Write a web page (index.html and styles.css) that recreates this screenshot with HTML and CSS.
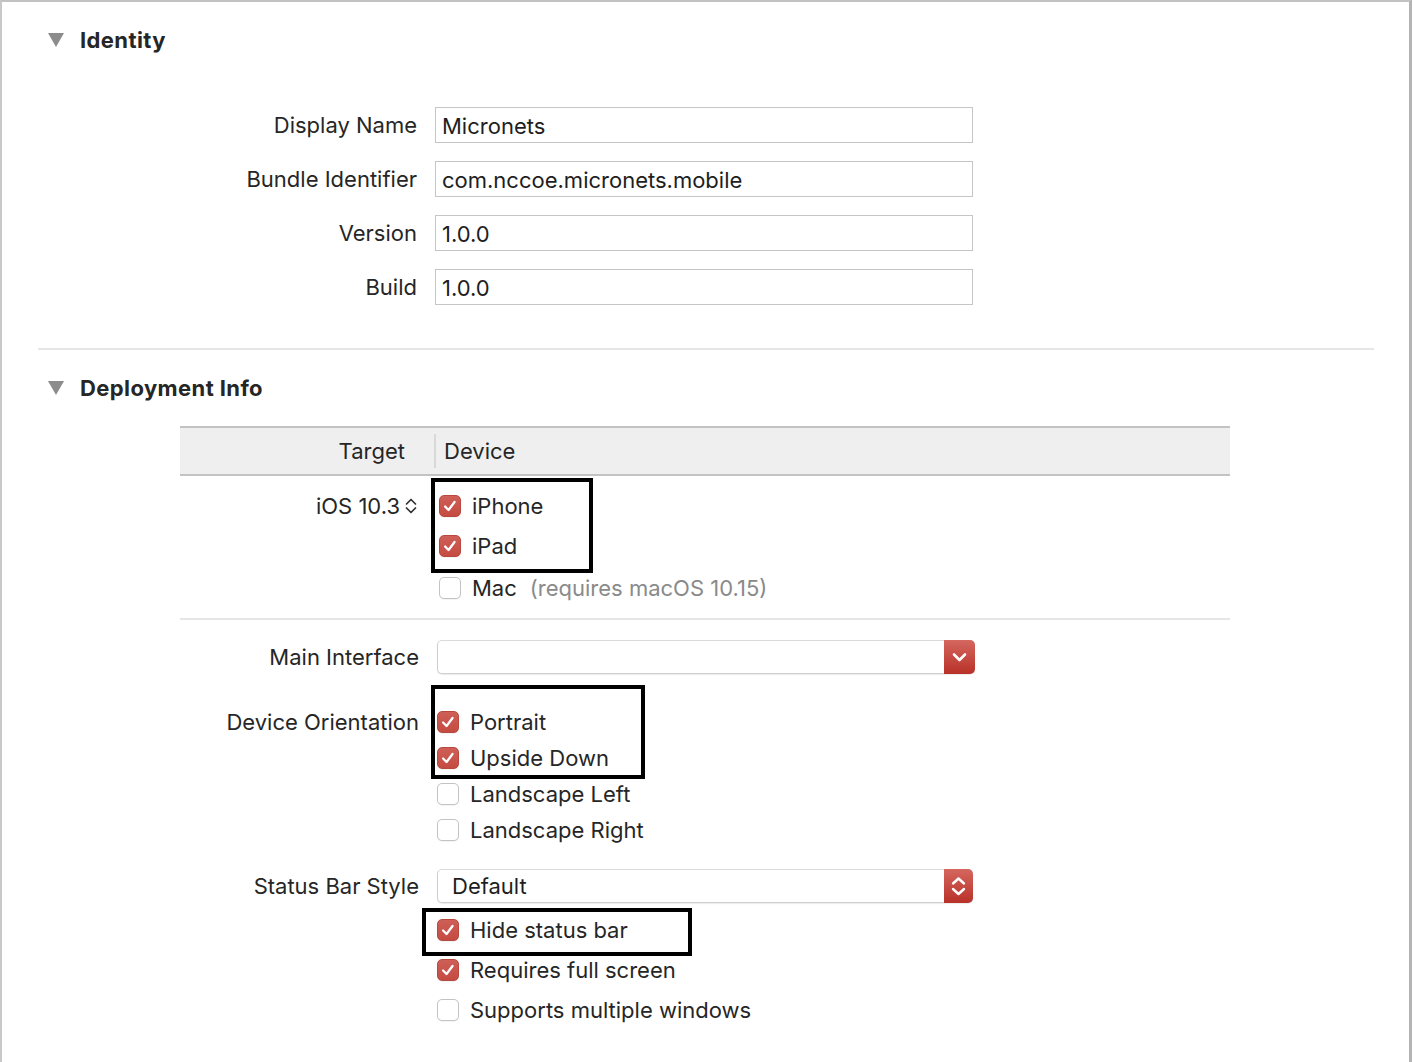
FILE: index.html
```html
<!DOCTYPE html>
<html lang="en">
<head>
  <meta charset="UTF-8">
  <meta name="viewport" content="width=device-width, initial-scale=1.0">
  <link rel="stylesheet" href="styles.css">
  <title>General - Micronets</title>
</head>
<body>

  <div class="pane">

    <!-- Identity -->
    <section class="group">
      <h2 class="group-title"><span class="disclosure"></span>Identity</h2>

      <div class="id-form">
        <div class="label">Display Name</div>
        <div class="field">Micronets</div>
        <div class="label">Bundle Identifier</div>
        <div class="field">com.nccoe.micronets.mobile</div>
        <div class="label">Version</div>
        <div class="field">1.0.0</div>
        <div class="label">Build</div>
        <div class="field">1.0.0</div>
      </div>
    </section>

    <div class="divider"></div>

    <!-- Deployment Info -->
    <section class="group">
      <h2 class="group-title group-title-deploy"><span class="disclosure"></span>Deployment Info</h2>

      <div class="targets">
        <div class="targets-head">
          <div class="th th-target">Target</div>
          <div class="th th-device">Device</div>
        </div>
        <div class="targets-body">
          <div class="target-os">
            iOS 10.3
            <svg class="stepper" width="12" height="18" viewBox="0 0 12 18">
              <path d="M1.5 7 L6 2.5 L10.5 7" fill="none" stroke="#333" stroke-width="1.7" stroke-linecap="round" stroke-linejoin="round"/>
              <path d="M1.5 11 L6 15.5 L10.5 11" fill="none" stroke="#333" stroke-width="1.7" stroke-linecap="round" stroke-linejoin="round"/>
            </svg>
          </div>
          <div class="device-list">
            <div class="check-row"><span class="check on"><svg viewBox="0 0 22 22"><path d="M5.6 11.6 L9.4 15.4 L16 6.6"/></svg></span>iPhone</div>
            <div class="check-row"><span class="check on"><svg viewBox="0 0 22 22"><path d="M5.6 11.6 L9.4 15.4 L16 6.6"/></svg></span>iPad</div>
            <div class="check-row check-row-mac"><span class="check"></span>Mac<span class="note">(requires macOS 10.15)</span></div>
          </div>
        </div>
      </div>

      <div class="divider divider-short"></div>

      <div class="row row-main">
        <div class="label">Main Interface</div>
        <div class="popup">
          <div class="popup-value"></div>
          <span class="popup-btn">
            <svg width="31" height="34" viewBox="0 0 31 34"><path d="M10 14.5 L15.5 20 L21 14.5" fill="none" stroke="#fff" stroke-width="2.6" stroke-linecap="round" stroke-linejoin="round"/></svg>
          </span>
        </div>
      </div>

      <div class="row row-orient">
        <div class="label label-top">Device Orientation</div>
        <div class="check-list">
          <div class="check-row check-row-36"><span class="check on"><svg viewBox="0 0 22 22"><path d="M5.6 11.6 L9.4 15.4 L16 6.6"/></svg></span>Portrait</div>
          <div class="check-row check-row-36"><span class="check on"><svg viewBox="0 0 22 22"><path d="M5.6 11.6 L9.4 15.4 L16 6.6"/></svg></span>Upside Down</div>
          <div class="check-row check-row-36"><span class="check"></span>Landscape Left</div>
          <div class="check-row check-row-36"><span class="check"></span>Landscape Right</div>
        </div>
      </div>

      <div class="row row-status">
        <div class="label">Status Bar Style</div>
        <div class="popup popup-status">
          <div class="popup-value">Default</div>
          <span class="popup-btn">
            <svg width="29" height="34" viewBox="0 0 29 34"><path d="M9 14.5 L14.5 9.5 L20 14.5" fill="none" stroke="#fff" stroke-width="2.4" stroke-linecap="round" stroke-linejoin="round"/><path d="M9 20 L14.5 25 L20 20" fill="none" stroke="#fff" stroke-width="2.4" stroke-linecap="round" stroke-linejoin="round"/></svg>
          </span>
        </div>
      </div>

      <div class="row row-flags">
        <div class="label"></div>
        <div class="check-list">
          <div class="check-row"><span class="check on"><svg viewBox="0 0 22 22"><path d="M5.6 11.6 L9.4 15.4 L16 6.6"/></svg></span>Hide status bar</div>
          <div class="check-row"><span class="check on"><svg viewBox="0 0 22 22"><path d="M5.6 11.6 L9.4 15.4 L16 6.6"/></svg></span>Requires full screen</div>
          <div class="check-row"><span class="check"></span>Supports multiple windows</div>
        </div>
      </div>
    </section>

    <!-- annotation boxes drawn over the form -->
    <div class="mark mark-devices"></div>
    <div class="mark mark-orient"></div>
    <div class="mark mark-status"></div>

  </div>

</body>
</html>
```

FILE: styles.css
```css
html, body {
  margin: 0;
  padding: 0;
  background: #fff;
}

body {
  font-family: "Inter", "Liberation Sans", sans-serif;
  font-size: 22px;
  color: #262626;
}

.pane {
  position: relative;
  box-sizing: border-box;
  width: 1412px;
  height: 1062px;
  border-top: 2px solid #c2c2c2;
  border-left: 2px solid #c8c8c8;
  border-right: 3px solid #b4b4b4;
  overflow: hidden;
}

/* group headers */
.group-title {
  display: flex;
  align-items: center;
  margin: 24px 0 0 0;
  height: 28px;
  font-size: 22px;
  font-weight: 700;
  letter-spacing: 0.4px;
  color: #262626;
}

.group-title-deploy {
  margin-top: 24px;
}

.disclosure {
  width: 0;
  height: 0;
  margin-left: 46px;
  margin-right: 16px;
  border-left: 8.5px solid transparent;
  border-right: 8.5px solid transparent;
  border-top: 14px solid #8c8c8c;
}

/* identity form */
.id-form {
  display: grid;
  grid-template-columns: 415px 538px;
  grid-auto-rows: 36px;
  column-gap: 18px;
  row-gap: 18px;
  margin-top: 53px;
}

.label {
  display: flex;
  align-items: center;
  justify-content: flex-end;
  white-space: nowrap;
}

.field {
  box-sizing: border-box;
  display: flex;
  align-items: center;
  padding: 2px 0 0 6px;
  border: 1px solid #c6c6c6;
  background: #fff;
  color: #1e1e1e;
}

.divider {
  height: 2px;
  background: #e6e6e6;
  margin: 43px 0 0 36px;
  width: 1336px;
}

.divider-short {
  margin: 10px 0 0 178px;
  width: 1050px;
}

/* target / device table */
.targets {
  margin: 24px 0 0 178px;
  width: 1050px;
}

.targets-head {
  display: flex;
  box-sizing: border-box;
  height: 50px;
  background: #efefef;
  border-top: 2px solid #c3c3c3;
  border-bottom: 2px solid #c3c3c3;
}

.th {
  display: flex;
  align-items: center;
}

.th-target {
  box-sizing: border-box;
  width: 254px;
  justify-content: flex-end;
  padding-right: 29px;
}

.th-device {
  margin: 6px 0;
  padding-left: 8px;
  border-left: 2px solid #d9d9d9;
}

.targets-body {
  display: grid;
  grid-template-columns: 237px 1fr;
  column-gap: 20px;
  padding-top: 10px;
}

.target-os {
  display: flex;
  align-items: center;
  justify-content: flex-end;
  gap: 5px;
  height: 40px;
}

.device-list {
  padding-left: 2px;
}

/* checkboxes */
.check-row {
  display: flex;
  align-items: center;
  height: 40px;
  gap: 11px;
  white-space: nowrap;
}

.check-row-36 {
  height: 36px;
}

.check-row-mac {
  margin-top: 2px;
}

.note {
  margin-left: 2px;
  color: #8a8a8a;
}

.check {
  box-sizing: border-box;
  display: inline-block;
  flex: none;
  width: 22px;
  height: 22px;
  border-radius: 5px;
  border: 1px solid #c3c3c3;
  background: #fff;
  box-shadow: 0 1px 1px rgba(0, 0, 0, 0.05);
}

.check.on {
  border: 1px solid #b94840;
  background: linear-gradient(#cf5f57, #c44b42);
}

.check svg {
  display: block;
  width: 20px;
  height: 20px;
}

.check svg path {
  fill: none;
  stroke: #fff;
  stroke-width: 2.5;
  stroke-linecap: round;
  stroke-linejoin: round;
}

/* deployment rows */
.row {
  display: grid;
  grid-template-columns: 417px 1fr;
  column-gap: 18px;
}

.row-main {
  margin-top: 20px;
}

.row-orient {
  margin-top: 30px;
}

.row-status {
  margin-top: 21px;
}

.row-flags {
  margin-top: 7px;
}

.label-top {
  align-self: start;
  height: 36px;
}

.popup {
  box-sizing: border-box;
  display: flex;
  width: 538px;
  height: 34px;
  border: 1px solid #cfcfcf;
  border-top-color: #dadada;
  border-right: none;
  border-radius: 5px;
  background: #fff;
  box-shadow: 0 1px 1px rgba(0, 0, 0, 0.08);
}

.popup-status {
  width: 536px;
}

.popup-value {
  flex: 1;
  display: flex;
  align-items: center;
  padding-left: 14px;
  color: #1e1e1e;
}

.popup-btn {
  display: block;
  flex: none;
  margin: -1px 0;
  height: 34px;
  border-radius: 0 5px 5px 0;
  background: linear-gradient(#d4675f, #b93128);
}

.popup-btn svg {
  display: block;
}

/* annotation boxes */
.mark {
  position: absolute;
  box-sizing: border-box;
  border: 4px solid #000;
}

.mark-devices {
  left: 429px;
  top: 476px;
  width: 162px;
  height: 95px;
}

.mark-orient {
  left: 429px;
  top: 683px;
  width: 214px;
  height: 94px;
}

.mark-status {
  left: 420px;
  top: 906px;
  width: 270px;
  height: 48px;
}
```
